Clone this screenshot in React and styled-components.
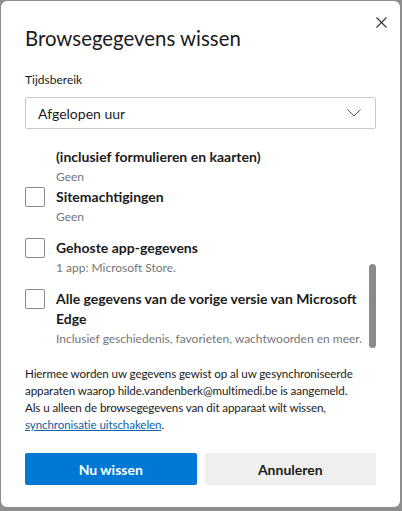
import React from 'react';
import styled, { createGlobalStyle } from 'styled-components';

const GlobalStyle = createGlobalStyle`
  html, body {
    margin: 0;
    padding: 0;
    background: #8e8e8e;
  }
  body {
    font-family: Lato, 'Noto Sans', sans-serif;
    color: #1b1b1b;
  }
`;

const Dialog = styled.div`
  position: relative;
  box-sizing: border-box;
  margin: 1px 0 0 1px;
  width: 399px;
  height: 506px;
  background: #fff;
  border-radius: 6px;
  padding: 23px 24px 22px;
  display: flex;
  flex-direction: column;
`;

const CloseButton = styled.button`
  position: absolute;
  top: 11px;
  right: 9px;
  width: 20px;
  height: 20px;
  border: 0;
  background: transparent;
  padding: 0;
  display: flex;
  align-items: center;
  justify-content: center;
  color: #333;
`;

const Title = styled.h1`
  margin: 0;
  font-size: 20.4px;
  line-height: 28px;
  font-weight: 400;
  color: #1b1b1b;
`;

const Label = styled.div`
  margin-top: 19px;
  font-size: 12px;
  line-height: 18px;
  color: #1b1b1b;
`;

const Select = styled.div`
  box-sizing: border-box;
  margin-top: 8px;
  height: 32px;
  border: 1px solid #c8c8c8;
  border-radius: 2px;
  display: flex;
  align-items: center;
  justify-content: space-between;
  padding: 0 14px 0 12px;
  font-size: 14px;
  color: #1b1b1b;
`;

const List = styled.div`
  position: relative;
  margin-top: 12px;
  height: 210px;
  padding-top: 6px;
  box-sizing: border-box;
  overflow: hidden;
  display: flex;
  flex-direction: column;
`;

const Item = styled.div`
  display: flex;
  gap: 11px;
  margin-bottom: ${p => (p.$tight ? '1px' : '12px')};
`;

const Check = styled.span`
  flex: none;
  box-sizing: border-box;
  width: 20px;
  height: 20px;
  border: 1px solid #8a8a8a;
  border-radius: 2px;
  visibility: ${p => (p.$hidden ? 'hidden' : 'visible')};
`;

const ItemText = styled.div`
  display: flex;
  flex-direction: column;
  padding-right: 10px;
`;

const ItemTitle = styled.div`
  font-size: 14px;
  line-height: 20px;
  font-weight: 700;
  color: #1b1b1b;
`;

const ItemSub = styled.div`
  font-size: 12px;
  line-height: 19px;
  color: #767676;
`;

const Thumb = styled.div`
  position: absolute;
  right: 0;
  top: 123px;
  width: 7px;
  height: 84px;
  border-radius: 4px;
  background: #8a8a8a;
`;

const Note = styled.p`
  margin: 14px 0 0;
  font-size: 11.6px;
  letter-spacing: -0.1px;
  line-height: 17px;
  color: #1b1b1b;
`;

const NoteLink = styled.a`
  color: #0f5fa8;
  text-decoration: underline;
`;

const Buttons = styled.div`
  margin-top: auto;
  display: grid;
  grid-template-columns: 1fr 1fr;
  gap: 8px;
`;

const Button = styled.button`
  height: 32px;
  border: 0;
  border-radius: 2px;
  font-family: inherit;
  font-size: 14px;
  font-weight: 700;
  background: ${p => (p.$primary ? '#0078d4' : '#efefef')};
  color: ${p => (p.$primary ? '#fff' : '#1b1b1b')};
`;

const items = [
  { title: '(inclusief formulieren en kaarten)', sub: 'Geen', hidden: true, tight: true },
  { title: 'Sitemachtigingen', sub: 'Geen' },
  { title: 'Gehoste app-gegevens', sub: '1 app: Microsoft Store.' },
  {
    title: 'Alle gegevens van de vorige versie van Microsoft Edge',
    sub: 'Inclusief geschiedenis, favorieten, wachtwoorden en meer.'
  }
];

const App = () => {
  return (
    <>
      <GlobalStyle />
      <Dialog>
        <CloseButton aria-label='Sluiten'>
          <svg width='11' height='11' viewBox='0 0 11 11'>
            <path d='M0.5 0.5 L10.5 10.5 M10.5 0.5 L0.5 10.5' stroke='#333' strokeWidth='1.1' fill='none' />
          </svg>
        </CloseButton>
        <Title>Browsegegevens wissen</Title>
        <Label>Tijdsbereik</Label>
        <Select>
          <span>Afgelopen uur</span>
          <svg width='14' height='8' viewBox='0 0 14 8'>
            <path d='M0.5 0.5 L7 7 L13.5 0.5' stroke='#555' strokeWidth='1' fill='none' />
          </svg>
        </Select>
        <List>
          {items.map(item => (
            <Item key={item.title} $tight={item.tight}>
              <Check $hidden={item.hidden} />
              <ItemText>
                <ItemTitle>{item.title}</ItemTitle>
                <ItemSub>{item.sub}</ItemSub>
              </ItemText>
            </Item>
          ))}
          <Thumb />
        </List>
        <Note>
          Hiermee worden uw gegevens gewist op al uw gesynchroniseerde apparaten waarop
          hilde.vandenberk@multimedi.be is aangemeld.
          <br />
          Als u alleen de browsegegevens van dit apparaat wilt wissen,
          <br />
          <NoteLink href='#'>synchronisatie uitschakelen</NoteLink>.
        </Note>
        <Buttons>
          <Button $primary>Nu wissen</Button>
          <Button>Annuleren</Button>
        </Buttons>
      </Dialog>
    </>
  );
};

export default App;
